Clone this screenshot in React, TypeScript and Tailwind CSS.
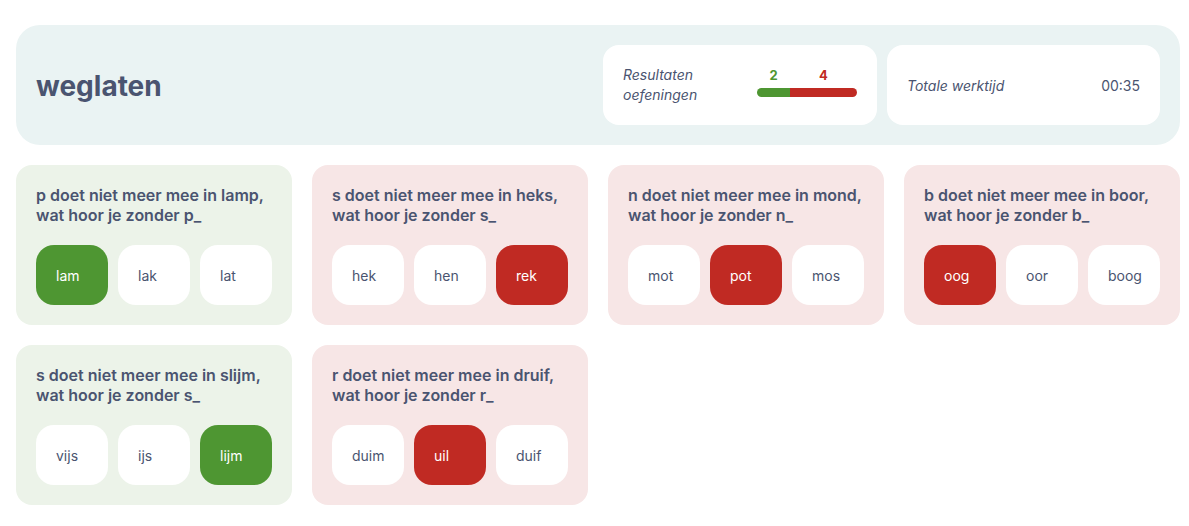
import React from "react";

type Q = { title: [string, string]; opts: string[]; sel: number; ok: boolean };

const qs: Q[] = [
  { title: ["p doet niet meer mee in lamp,", "wat hoor je zonder p_"], opts: ["lam", "lak", "lat"], sel: 0, ok: true },
  { title: ["s doet niet meer mee in heks,", "wat hoor je zonder s_"], opts: ["hek", "hen", "rek"], sel: 2, ok: false },
  { title: ["n doet niet meer mee in mond,", "wat hoor je zonder n_"], opts: ["mot", "pot", "mos"], sel: 1, ok: false },
  { title: ["b doet niet meer mee in boor,", "wat hoor je zonder b_"], opts: ["oog", "oor", "boog"], sel: 0, ok: false },
  { title: ["s doet niet meer mee in slijm,", "wat hoor je zonder s_"], opts: ["vijs", "ijs", "lijm"], sel: 2, ok: true },
  { title: ["r doet niet meer mee in druif,", "wat hoor je zonder r_"], opts: ["duim", "uil", "duif"], sel: 1, ok: false },
];

function Card({ q }: { q: Q }) {
  return (
    <div className={`rounded-2xl p-5 h-[160px] flex flex-col gap-5 ${q.ok ? "bg-[#ecf3e9]" : "bg-[#f7e6e6]"}`}>
      <div className="text-[16px] leading-5 font-semibold text-[#4a5470]">
        <div>{q.title[0]}</div>
        <div>{q.title[1]}</div>
      </div>
      <div className="flex gap-[10px]">
        {q.opts.map((o, i) => {
          const s = i === q.sel;
          const cls = s ? (q.ok ? "bg-[#4e9632] text-white" : "bg-[#c02a23] text-white") : "bg-white text-[#4a5470]";
          return (
            <div key={o} className={`w-[72px] h-[60px] rounded-[18px] pl-5 flex items-center text-[14px] ${cls}`}>
              {o}
            </div>
          );
        })}
      </div>
    </div>
  );
}

export default function App() {
  return (
    <div className="w-[1189px] h-[526px] bg-white p-4 pt-[25px] pr-[9px]" style={{ fontFamily: "Inter, 'Noto Sans', sans-serif" }}>
      <div className="h-[120px] rounded-3xl bg-[#eaf3f3] flex items-center pl-5 pr-5">
        <div className="flex-1 text-[28px] font-bold text-[#4a5470] pt-[2px]">weglaten</div>
        <div className="flex gap-[10px]">
          <div className="w-[274px] h-[80px] bg-white rounded-2xl px-5 flex items-center justify-between">
            <div className="italic text-[14px] leading-5 text-[#4a5470]">
              <div>Resultaten</div>
              <div>oefeningen</div>
            </div>
            <div className="w-[100px] flex flex-col gap-[5px] -mt-[6px]">
              <div className="flex text-[13px] font-bold leading-4">
                <div className="w-[33px] text-center text-[#4e9632]">2</div>
                <div className="flex-1 text-center text-[#c02a23]">4</div>
              </div>
              <div className="flex h-[9px] rounded-full overflow-hidden">
                <div className="w-[33px] bg-[#4e9632]" />
                <div className="flex-1 bg-[#c02a23]" />
              </div>
            </div>
          </div>
          <div className="w-[273px] h-[80px] bg-white rounded-2xl px-5 flex items-center justify-between text-[14px] text-[#4a5470]">
            <div className="italic">Totale werktijd</div>
            <div>00:35</div>
          </div>
        </div>
      </div>
      <div className="grid grid-cols-4 gap-5 mt-5 w-[1164px]">
        {qs.map((q, i) => (
          <Card key={i} q={q} />
        ))}
      </div>
    </div>
  );
}
